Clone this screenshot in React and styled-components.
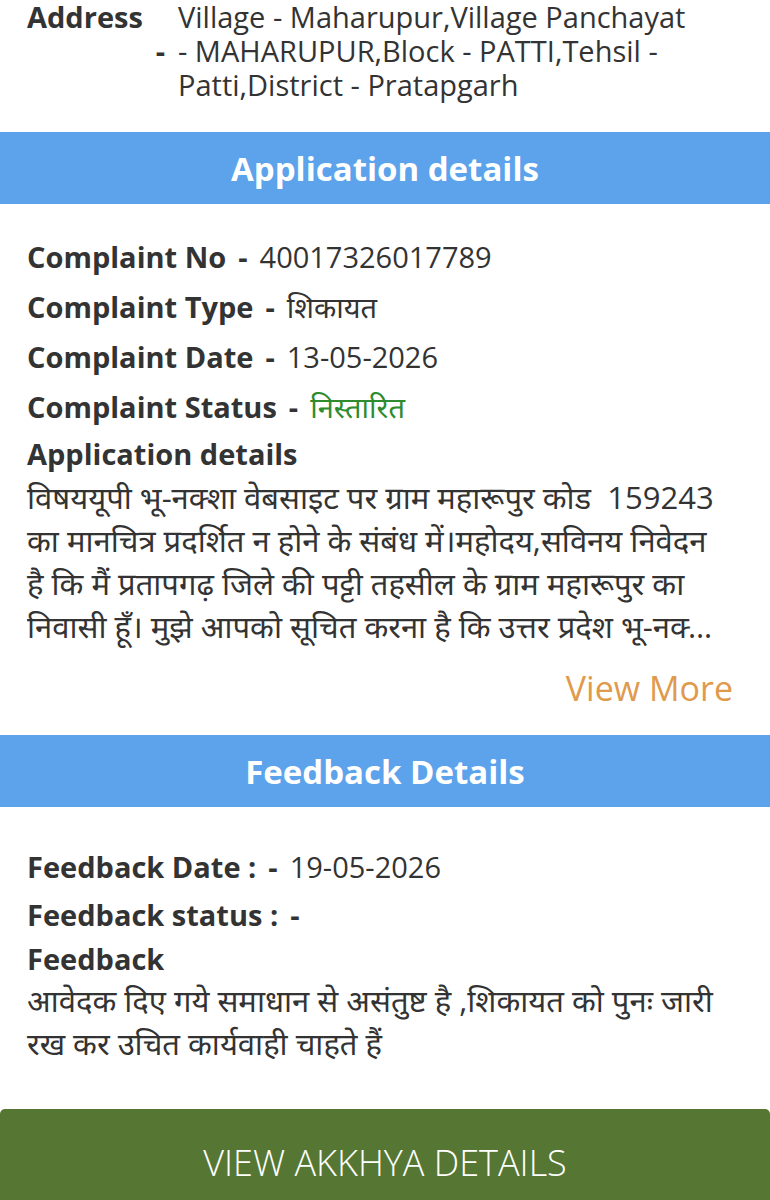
import React from "react";
import styled, { createGlobalStyle } from "styled-components";

const GlobalStyle = createGlobalStyle`
  html, body {
    margin: 0;
    padding: 0;
    background: #ffffff;
  }
  body {
    font-family: "Open Sans", "Noto Sans", "Noto Sans Devanagari", "Lohit Devanagari", sans-serif;
    color: #333333;
  }
`;

const Page = styled.div`
  width: 770px;
  display: flex;
  flex-direction: column;
`;

const AddressRow = styled.div`
  display: flex;
  padding: 0 27px;
  font-size: 29px;
  line-height: 34px;
  margin-bottom: 30px;
`;

const AddressLabel = styled.div`
  width: 151px;
  flex-shrink: 0;
  display: flex;
  flex-direction: column;
  font-weight: 700;
`;

const Dash = styled.span`
  align-self: flex-end;
  padding-right: 13px;
`;

const AddressValue = styled.div`
  width: 522px;
`;

const SectionBar = styled.div`
  height: 72px;
  background: #5ca3ec;
  color: #ffffff;
  font-size: 33px;
  font-weight: 700;
  display: flex;
  align-items: center;
  justify-content: center;
`;

const Section = styled.div`
  padding: ${(p) => p.$top}px 27px ${(p) => p.$bottom}px;
  display: flex;
  flex-direction: column;
`;

const InfoRow = styled.div`
  font-size: 29px;
  line-height: ${(p) => p.$lh || 50}px;
  white-space: nowrap;
`;

const Label = styled.span`
  font-weight: 700;
`;

const Sep = styled.span`
  font-weight: 700;
  margin: 0 12px 0 12px;
`;

const Value = styled.span`
  color: ${(p) => p.$color || "#333333"};
`;

const Paragraph = styled.div`
  font-size: 31px;
  line-height: 43px;
  display: flex;
  flex-direction: column;
`;

const Line = styled.div`
  white-space: pre;
  ${(p) =>
    p.$last &&
    `
    width: 690px;
    overflow: hidden;
    text-overflow: ellipsis;
  `}
`;

const ViewMore = styled.div`
  align-self: flex-end;
  margin-top: 18px;
  margin-right: 10px;
  font-size: 34px;
  line-height: 44px;
  color: #e09a4c;
`;

const ActionButton = styled.button`
  width: 770px;
  height: 106px;
  border: none;
  border-radius: 5px 5px 0 0;
  background: #557733;
  color: #ffffff;
  font-family: inherit;
  font-size: 36px;
  font-weight: 300;
`;

const App = () => {
  return (
    <Page>
      <GlobalStyle />
      <AddressRow>
        <AddressLabel>
          <span>Address</span>
          <Dash>-</Dash>
        </AddressLabel>
        <AddressValue>
          Village - Maharupur,Village Panchayat - MAHARUPUR,Block - PATTI,Tehsil
          - Patti,District - Pratapgarh
        </AddressValue>
      </AddressRow>

      <SectionBar>Application details</SectionBar>
      <Section $top={28} $bottom={25}>
        <InfoRow>
          <Label>Complaint No</Label>
          <Sep>-</Sep>
          <Value>40017326017789</Value>
        </InfoRow>
        <InfoRow>
          <Label>Complaint Type</Label>
          <Sep>-</Sep>
          <Value>शिकायत</Value>
        </InfoRow>
        <InfoRow>
          <Label>Complaint Date</Label>
          <Sep>-</Sep>
          <Value>13-05-2026</Value>
        </InfoRow>
        <InfoRow>
          <Label>Complaint Status</Label>
          <Sep>-</Sep>
          <Value $color="#2e8b2e">निस्तारित</Value>
        </InfoRow>
        <InfoRow $lh={44}>
          <Label>Application details</Label>
        </InfoRow>
        <Paragraph>
          <Line>विषययूपी भू-नक्शा वेबसाइट पर ग्राम महारूपुर कोड  159243</Line>
          <Line>का मानचित्र प्रदर्शित न होने के संबंध में।महोदय,सविनय निवेदन</Line>
          <Line>है कि मैं प्रतापगढ़ जिले की पट्टी तहसील के ग्राम महारूपुर का</Line>
          <Line $last>
            निवासी हूँ। मुझे आपको सूचित करना है कि उत्तर प्रदेश भू-नक्शा वेबसाइट पर
            हमारे ग्राम का मानचित्र प्रदर्शित नहीं हो रहा है
          </Line>
        </Paragraph>
        <ViewMore>View More</ViewMore>
      </Section>

      <SectionBar>Feedback Details</SectionBar>
      <Section $top={36} $bottom={44}>
        <InfoRow $lh={48}>
          <Label>Feedback Date :</Label>
          <Sep>-</Sep>
          <Value>19-05-2026</Value>
        </InfoRow>
        <InfoRow $lh={48}>
          <Label>Feedback status :</Label>
          <Sep>-</Sep>
        </InfoRow>
        <InfoRow $lh={40}>
          <Label>Feedback</Label>
        </InfoRow>
        <Paragraph>
          <Line>आवेदक दिए गये समाधान से असंतुष्ट है ,शिकायत को पुनः जारी</Line>
          <Line>रख कर उचित कार्यवाही चाहते हैं</Line>
        </Paragraph>
      </Section>

      <ActionButton type="button">VIEW AKKHYA DETAILS</ActionButton>
    </Page>
  );
};

export default App;
